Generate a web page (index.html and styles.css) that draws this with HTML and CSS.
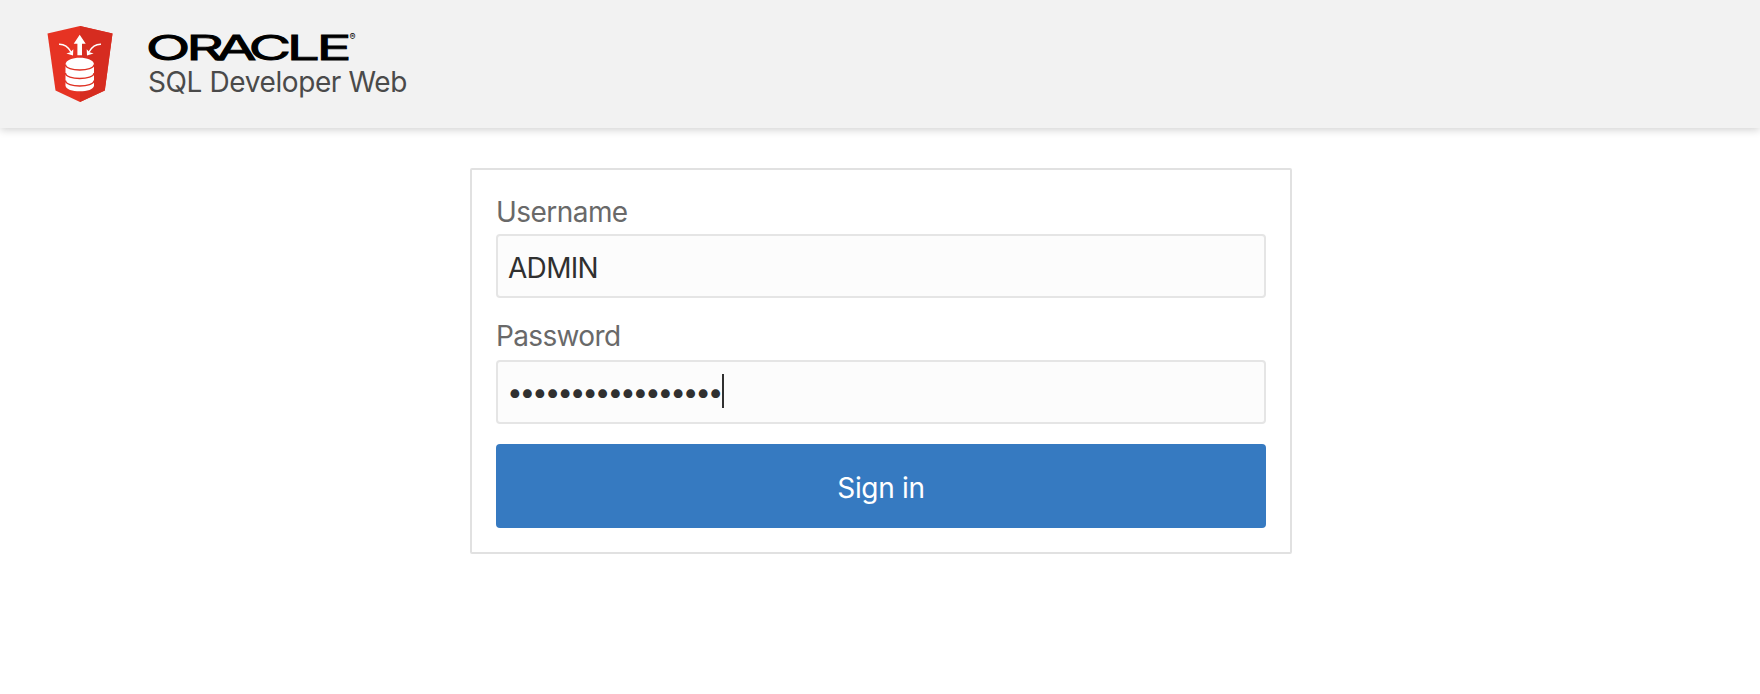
FILE: index.html
```html
<!DOCTYPE html>
<html lang="en">
<head>
<meta charset="utf-8">
<title>SQL Developer Web</title>
<link rel="stylesheet" href="styles.css">
</head>
<body>
<header class="header">
  <svg class="shield" viewBox="0 0 66 77" aria-hidden="true">
    <path fill="#e63323" d="M.5 7.500 33 0 65.500 7.500 57.800 64.500 33 76 8.500 64.500Z"/>
    <path fill="#d62c20" d="M33 0 65.500 7.500 57.800 64.500 33 76Z"/>
    <path fill="#fff" d="M32.700 8.700 38.700 17.700H35V29.300H30.400V17.700H26.700Z"/>
    <g fill="none" stroke="#fff" stroke-width="1.500">
      <path d="M12 18.300Q19.500 18 24 26"/>
      <path d="M54 18.300Q46.500 18 42 26"/>
    </g>
    <path fill="#fff" d="M26 29.600 19.400 27.600 23.400 26.300 26.300 23.300ZM40 29.600 46.600 27.600 42.600 26.300 39.700 23.300Z"/>
    <path fill="#fff" d="M18.500 38.500C18.500 29.500 47 29.500 47 38.500V59.500C47 67.300 18.500 67.300 18.500 59.500Z"/>
    <g fill="none" stroke="#df3022" stroke-width="1.400">
      <path d="M18.500 38.500C18.500 45.800 47 45.800 47 38.500"/>
      <path d="M18.500 47C18.500 54.300 47 54.300 47 47"/>
      <path d="M18.500 54.500C18.500 61.800 47 61.800 47 54.500"/>
    </g>
  </svg>
  <div class="brand">
    <svg class="wordmark" viewBox="0 0 212 28">
      <text class="oracle" transform="scale(1.72 1)" x="-1.300 22.200 39.700 58.500 80.700 98" y="26.500">ORACLE</text>
      <text class="reg" x="201.500" y="7">®</text>
    </svg>
    <div class="product">SQL Developer Web</div>
  </div>
</header>
<main class="card">
  <div class="label">Username</div>
  <div class="field"><span class="value">ADMIN</span></div>
  <div class="label second">Password</div>
  <div class="field"><span class="dots">•••••••••••••••••</span><span class="caret"></span></div>
  <div class="button">Sign in</div>
</main>
</body>
</html>
```
FILE: styles.css
```css
* { box-sizing: border-box; }
body {
  margin: 0;
  background: #fff;
  font-family: Inter, "Liberation Sans", sans-serif;
  font-size: 28px;
  line-height: 34px;
}
.header {
  display: flex;
  height: 128px;
  padding: 26px 0 0 47px;
  background: #f2f2f2;
  box-shadow: 0 2px 8px rgba(0, 0, 0, .18);
}
.shield { width: 66px; height: 77px; }
.brand { margin: 7px 0 0 35px; }
.wordmark { display: block; width: 212px; height: 28px; overflow: visible; }
.oracle {
  font-size: 34px;
  font-weight: 400;
  fill: #000;
  stroke: #000;
  stroke-width: .8px;
}
.reg { font-size: 9px; fill: #000; }
.product {
  margin-top: 4px;
  color: #4a4a4a;
  letter-spacing: -.4px;
  white-space: nowrap;
}
.card {
  width: 822px;
  height: 386px;
  margin: 40px 0 0 470px;
  padding: 24px 24px 24px;
  border: 2px solid #e1e1e1;
  border-radius: 2px;
}
.label { height: 40px; padding-top: 1px; color: #696969; letter-spacing: -.55px; }
.label.second { height: 42px; margin-top: 20px; letter-spacing: -.65px; }
.field {
  display: flex;
  align-items: center;
  height: 64px;
  padding-left: 10px;
  border: 2px solid #e5e5e5;
  border-radius: 4px;
  background: #fcfcfc;
  color: #303030;
}
.value { padding-top: 3px; letter-spacing: -.7px; }
.dots { margin-left: -1px; letter-spacing: -3.200px; }
.caret { width: 2px; height: 34px; margin: 0 0 2px 2px; background: #303030; }
.button {
  height: 84px;
  margin-top: 20px;
  padding-top: 27px;
  border-radius: 4px;
  background: #367ac1;
  color: #fff;
  letter-spacing: -.3px;
  text-align: center;
}
```
